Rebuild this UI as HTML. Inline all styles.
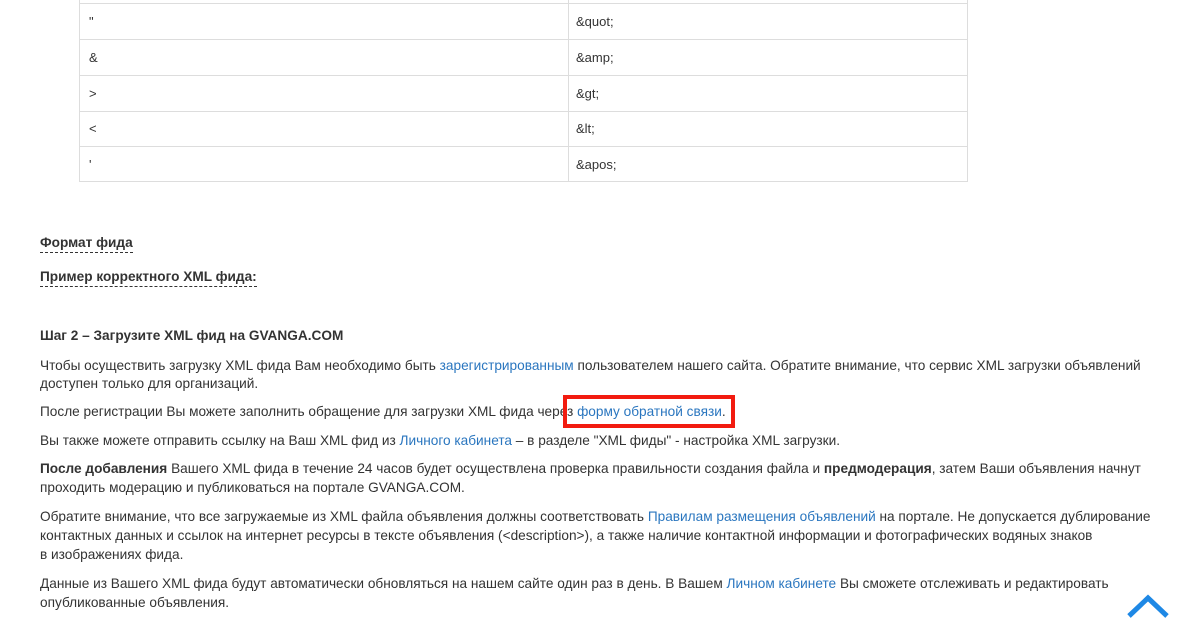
<!DOCTYPE html>
<html><head><meta charset="utf-8"><style>
body{margin:0;width:1187px;height:617px;overflow:hidden;background:#fff;font-family:"Liberation Sans",sans-serif;color:#333;font-size:13.65px;position:relative}
.l{position:absolute;left:40px;white-space:nowrap;line-height:18px}
a{color:#2a76bf;text-decoration:none}
b{font-weight:bold}
.h{font-weight:bold;border-bottom:1px dashed #333;padding-bottom:2px;line-height:16px}
.hl{position:absolute;left:79px;width:888px;height:1px;background:#ddd}
.cell{position:absolute;line-height:18px;font-size:13px}
</style></head><body>
<div style="position:absolute;left:79px;top:0;width:1px;height:182px;background:#ddd"></div>
<div style="position:absolute;left:568px;top:0;width:1px;height:182px;background:#ddd"></div>
<div style="position:absolute;left:967px;top:0;width:1px;height:182px;background:#ddd"></div>
<div class="hl" style="top:3px"></div><div class="hl" style="top:39px"></div><div class="hl" style="top:75px"></div><div class="hl" style="top:111px"></div><div class="hl" style="top:146px"></div><div class="hl" style="top:181px"></div>
<div class="cell" style="left:89px;top:13px">"</div><div class="cell" style="left:576px;top:13px">&amp;quot;</div>
<div class="cell" style="left:89px;top:49px">&amp;</div><div class="cell" style="left:576px;top:49px">&amp;amp;</div>
<div class="cell" style="left:89px;top:85px">&gt;</div><div class="cell" style="left:576px;top:85px">&amp;gt;</div>
<div class="cell" style="left:89px;top:120px">&lt;</div><div class="cell" style="left:576px;top:120px">&amp;lt;</div>
<div class="cell" style="left:89px;top:156px">'</div><div class="cell" style="left:576px;top:156px">&amp;apos;</div>

<div class="l" style="top:234px"><span class="h">Формат фида</span></div>
<div class="l" style="top:268px"><span class="h">Пример корректного XML фида:</span></div>
<div class="l" style="top:327px"><b>Шаг 2 – Загрузите XML фид на GVANGA.COM</b></div>
<div class="l" style="top:357px">Чтобы осуществить загрузку XML фида Вам необходимо быть <a>зарегистрированным</a> пользователем нашего сайта. Обратите внимание, что сервис XML загрузки объявлений</div>
<div class="l" style="top:375px">доступен только для организаций.</div>
<div class="l" style="top:403px">После регистрации Вы можете заполнить обращение для загрузки XML фида через <a>форму обратной связи</a>.</div>
<div style="position:absolute;left:563px;top:395px;width:164px;height:25px;border:4px solid #f21b0f"></div>
<div class="l" style="top:432px">Вы также можете отправить ссылку на Ваш XML фид из <a>Личного кабинета</a> – в разделе "XML фиды" - настройка XML загрузки.</div>
<div class="l" style="top:460px"><b>После добавления</b> Вашего XML фида в течение 24 часов будет осуществлена проверка правильности создания файла и <b>предмодерация</b>, затем Ваши объявления начнут</div>
<div class="l" style="top:479px">проходить модерацию и публиковаться на портале GVANGA.COM.</div>
<div class="l" style="top:508px">Обратите внимание, что все загружаемые из XML файла объявления должны соответствовать <a>Правилам размещения объявлений</a> на портале. Не допускается дублирование</div>
<div class="l" style="top:527px">контактных данных и ссылок на интернет ресурсы в тексте объявления (&lt;description&gt;), а также наличие контактной информации и фотографических водяных знаков</div>
<div class="l" style="top:546px">в изображениях фида.</div>
<div class="l" style="top:575px">Данные из Вашего XML фида будут автоматически обновляться на нашем сайте один раз в день. В Вашем <a>Личном кабинете</a> Вы сможете отслеживать и редактировать</div>
<div class="l" style="top:594px">опубликованные объявления.</div>
<svg style="position:absolute;left:1126px;top:594px" width="44" height="24"><path d="M3 22 L22 4 L41 22" fill="none" stroke="#1e88e5" stroke-width="5"/></svg>
</body></html>
